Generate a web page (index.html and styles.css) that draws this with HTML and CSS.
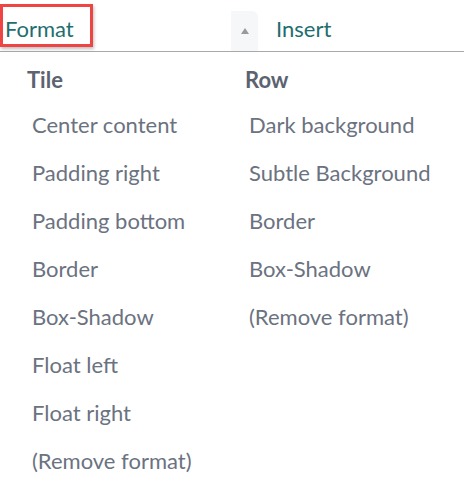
FILE: index.html
```html
<!DOCTYPE html>
<html>
<head>
<meta charset="utf-8">
<link rel="stylesheet" href="styles.css">
</head>
<body>
<div class="tabs">
  <div class="tab tab-active">Format</div>
  <div class="toggle"><span class="arrow"></span></div>
  <div class="tab tab-insert">Insert</div>
</div>
<div class="menu">
  <div class="col">
    <div class="head">Tile</div>
    <div class="item">Center content</div>
    <div class="item">Padding right</div>
    <div class="item">Padding bottom</div>
    <div class="item">Border</div>
    <div class="item">Box-Shadow</div>
    <div class="item">Float left</div>
    <div class="item">Float right</div>
    <div class="item">(Remove format)</div>
  </div>
  <div class="col col-right">
    <div class="head">Row</div>
    <div class="item">Dark background</div>
    <div class="item">Subtle Background</div>
    <div class="item">Border</div>
    <div class="item">Box-Shadow</div>
    <div class="item">(Remove format)</div>
  </div>
</div>
</body>
</html>
```

FILE: styles.css
```css
html, body {
  margin: 0;
  padding: 0;
  background: #ffffff;
}
body {
  font-family: Lato, "Open Sans", sans-serif;
  width: 464px;
  height: 492px;
  overflow: hidden;
}
.tabs {
  display: flex;
  align-items: flex-end;
  height: 51px;
  border-bottom: 1px solid #a9a9a9;
}
.tab {
  font-size: 22px;
  color: #1f6e6f;
  line-height: 26px;
}
.tab-active {
  box-sizing: border-box;
  width: 93px;
  height: 43px;
  margin-bottom: 4px;
  border: 3px solid #ef4444;
  box-shadow: 1px 2px 3px rgba(0,0,0,0.25);
  padding: 9px 0 0 2px;
}
.toggle {
  margin-left: 138px;
  width: 27px;
  height: 40px;
  background: #f6f7f9;
  border-top-right-radius: 6px;
  display: flex;
  align-items: center;
  justify-content: center;
}
.arrow {
  width: 0;
  height: 0;
  border-left: 4px solid transparent;
  border-right: 4px solid transparent;
  border-bottom: 6px solid #9a9a9a;
}
.tab-insert {
  margin-left: 18px;
  padding-bottom: 9px;
}
.menu {
  display: flex;
  padding: 15px 0 0 27px;
}
.col {
  width: 218px;
  display: flex;
  flex-direction: column;
}
.head {
  font-size: 22px;
  font-weight: 700;
  color: #5b6370;
  line-height: 26px;
  margin-bottom: 19px;
}
.item {
  font-size: 22px;
  color: #6b7280;
  line-height: 26px;
  padding-left: 5px;
  margin-bottom: 22px;
}
.col-right .item {
  padding-left: 4px;
}
```
